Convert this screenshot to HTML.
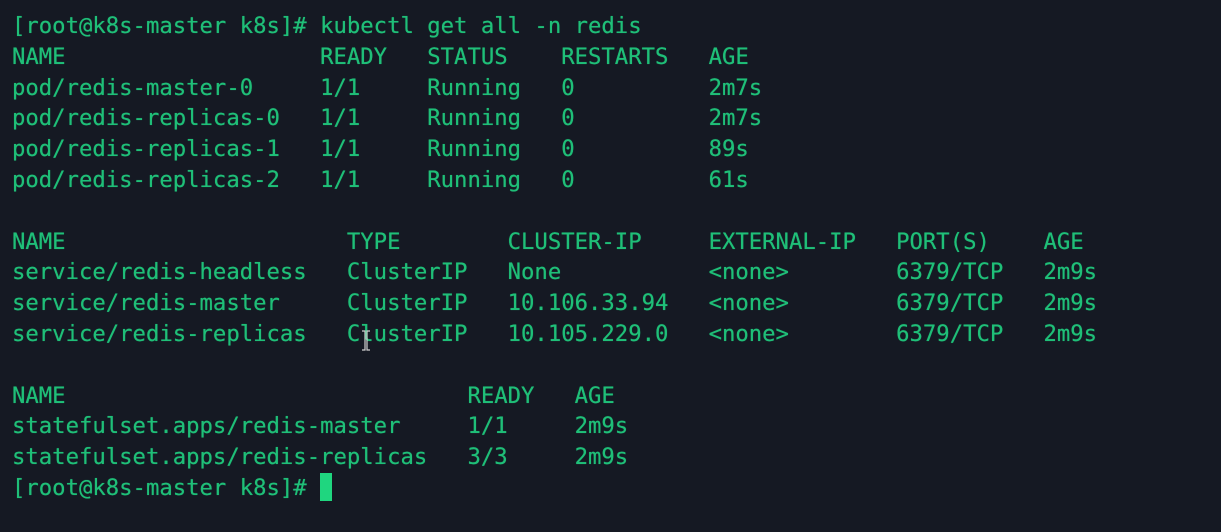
<!DOCTYPE html>
<html><head><meta charset="utf-8"><style>
html,body{margin:0;padding:0;background:#151923;width:1221px;height:532px;overflow:hidden;position:relative}
pre{margin:0;padding:11px 0 0 12px;font-family:"DejaVu Sans Mono","Liberation Mono",monospace;font-size:22.25px;line-height:30.8px;color:#1fbf78;letter-spacing:0;text-shadow:0 0 0.6px #1fbf78}
.cur{display:inline-block;width:12px;height:28px;background:#1fd67f;vertical-align:-6px}
svg{position:absolute;left:360px;top:330px}
</style></head><body><pre>[root@k8s-master k8s]# kubectl get all -n redis
NAME                   READY   STATUS    RESTARTS   AGE
pod/redis-master-0     1/1     Running   0          2m7s
pod/redis-replicas-0   1/1     Running   0          2m7s
pod/redis-replicas-1   1/1     Running   0          89s
pod/redis-replicas-2   1/1     Running   0          61s

NAME                     TYPE        CLUSTER-IP     EXTERNAL-IP   PORT(S)    AGE
service/redis-headless   ClusterIP   None           &lt;none&gt;        6379/TCP   2m9s
service/redis-master     ClusterIP   10.106.33.94   &lt;none&gt;        6379/TCP   2m9s
service/redis-replicas   ClusterIP   10.105.229.0   &lt;none&gt;        6379/TCP   2m9s

NAME                              READY   AGE
statefulset.apps/redis-master     1/1     2m9s
statefulset.apps/redis-replicas   3/3     2m9s
[root@k8s-master k8s]# <span class="cur"></span></pre>
<svg width="12" height="22" viewBox="0 0 12 22"><path d="M2 1h3v19H2M10 1H7v19h3" fill="none" stroke="#d0d0d0" stroke-width="1.2"/></svg>
</body></html>
